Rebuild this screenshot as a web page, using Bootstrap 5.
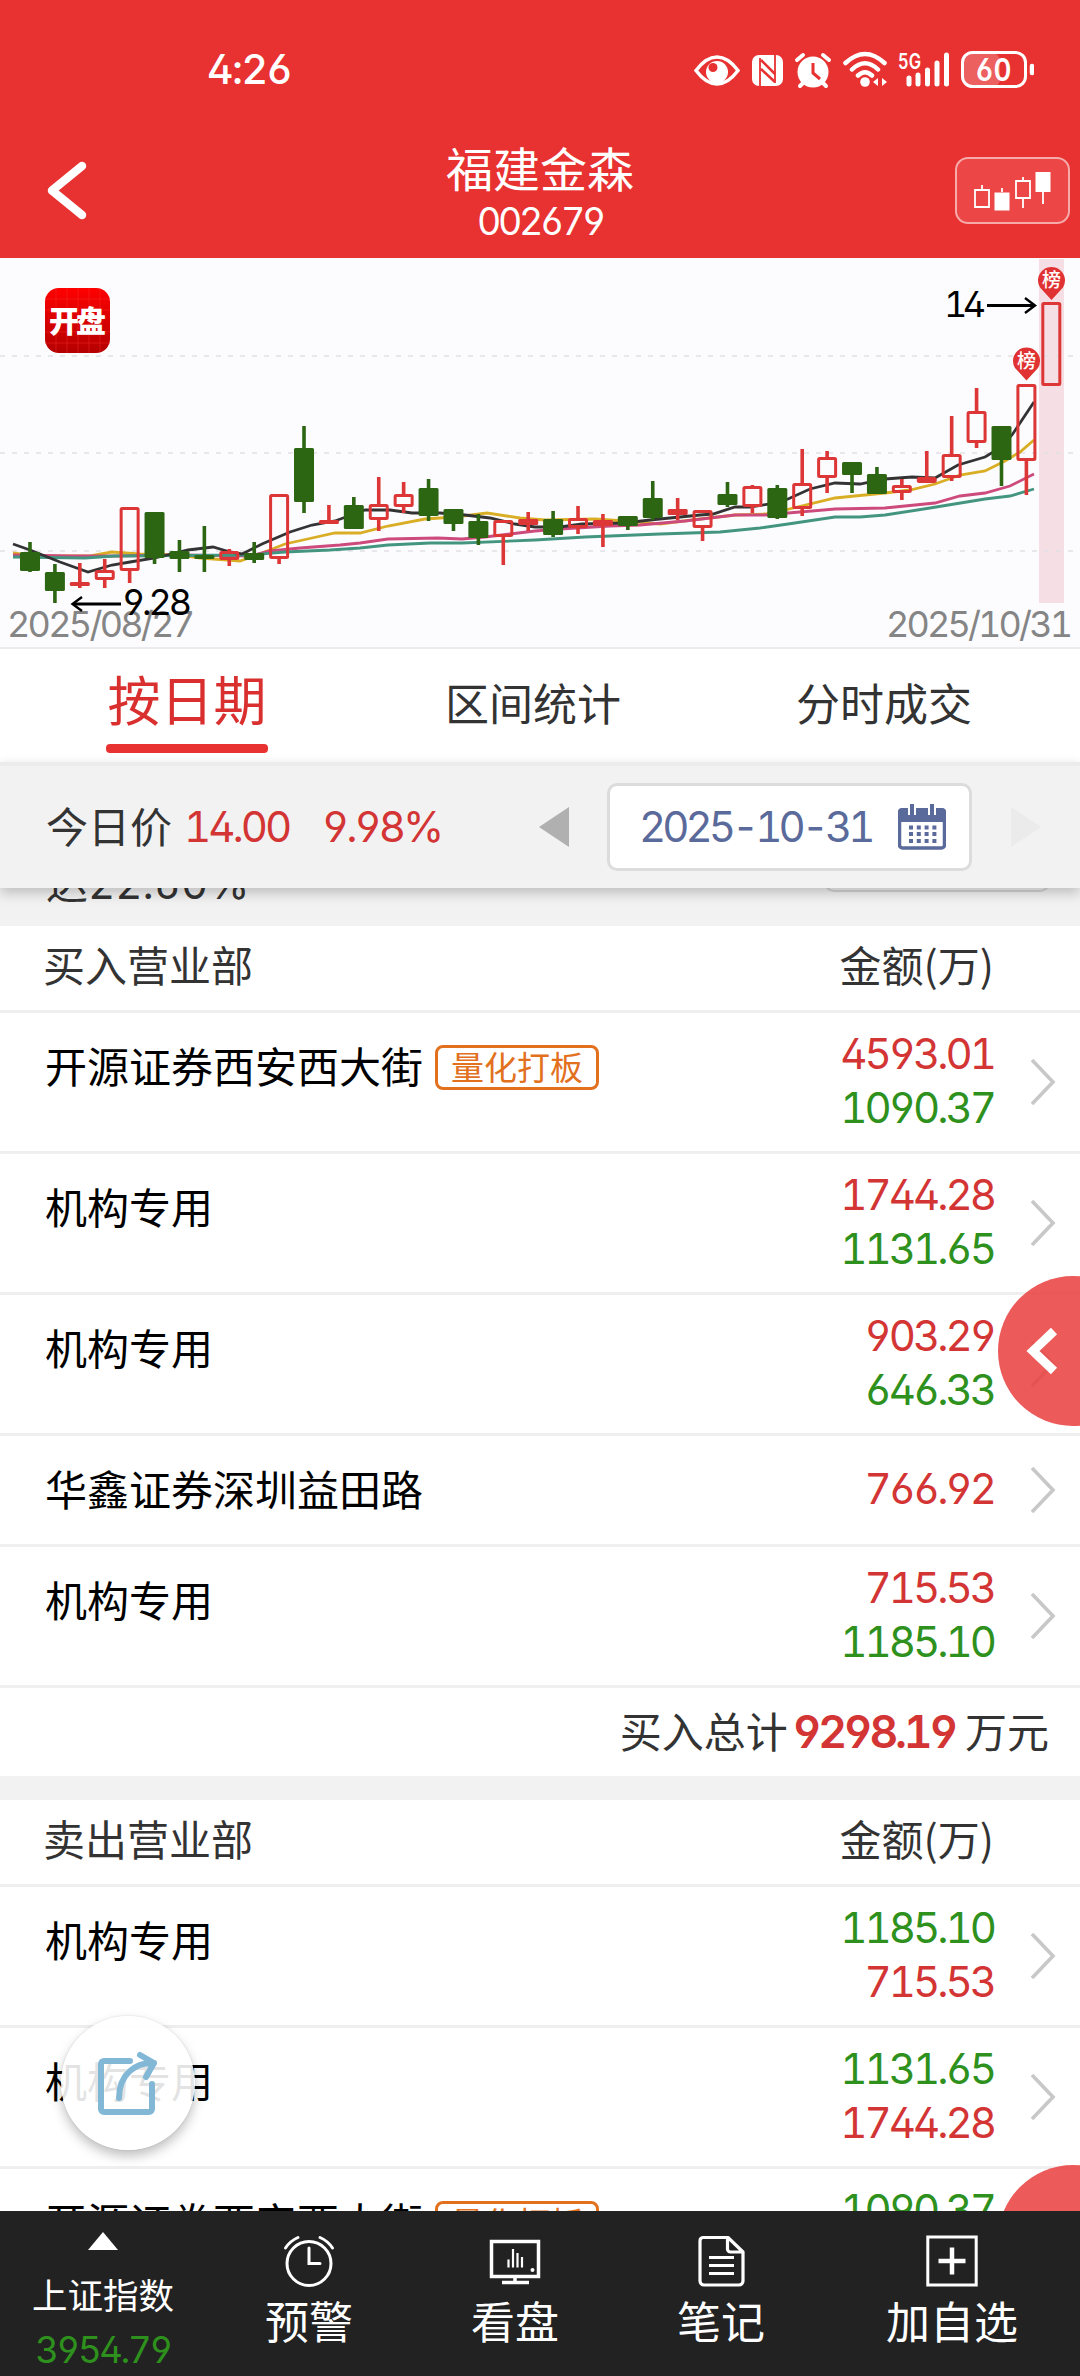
<!DOCTYPE html>
<html lang="zh-CN">
<head>
<meta charset="utf-8">
<meta name="viewport" content="width=device-width, initial-scale=1">
<title>福建金森 002679</title>
<link href="https://cdn.jsdelivr.net/npm/bootstrap@5.3.0/dist/css/bootstrap.min.css" rel="stylesheet">
<style>
body{font-family:Inter,"Noto Sans CJK SC",sans-serif;font-feature-settings:"tnum","cv02","cv03","cv04";color:#333;background:#fff;font-size:42px;line-height:54px}
.screen{width:1080px;height:2376px}
.cn{font-family:"Noto Sans CJK SC",sans-serif}
.num{letter-spacing:-3px;white-space:nowrap}
.up{color:#d33434}.down{color:#2e911d}
.top-area{height:258px;background:#e83131}
.status{height:138px;padding:0 46px 0 207px}
.clock{font-size:41px;font-weight:500;letter-spacing:-1.6px}
.titlebar{height:120px;padding:0 10px 0 45px}
.title-name{font-size:47px;line-height:58px}
.title-code{font-size:37.5px;line-height:52px;letter-spacing:-3.3px}
.kbtn{width:115px;height:67px;border:2px solid #f6aaaa;border-radius:13px;background:#ec4646;margin-top:19px}
.backbox{width:80px;padding-top:17px}
.chart{height:391px;background:#fcfcff;border-bottom:2px solid #ececf0}
.tabs{height:113px}
.tab-a{width:374px}.tab-b{width:318px}.tab-c{width:384px}
.tab-main{font-size:53px;line-height:91px;color:#d92f2f}
.underbar{width:162px;height:8.5px;border-radius:4px;background:#e83131}
.tab-text{font-size:44px;padding-bottom:7px}
.pricebar{height:126px;background:#f2f2f2;border-top:4px solid #ececec;box-shadow:0 5px 12px rgba(0,0,0,.22);padding-left:46px;z-index:2}
.price-label{padding-bottom:5px}
.price-val{margin-left:12px;width:138px}
.price-pct{width:216px}
.datebox{width:365px;height:88px;border:3px solid #dcdcdc;border-radius:10px;background:#fff;color:#5a6a9b;margin-left:37px;padding-left:29px}
.date-text{width:259px;letter-spacing:-4px;white-space:nowrap}
.next-arrow{margin-left:38px}
.peek{height:38px;background:#f2f2f2;padding-left:46px}
.peek-line{margin-top:-31px}
.peek-btn{width:226px;height:46px;margin:-42px 30px 0 0;border:2px solid #d4d4d4;border-radius:10px}
.headrow{height:87px;border-bottom:3px solid #efefef;padding:0 86px 9px 43px}
.seat{min-height:111px;border-bottom:3px solid #efefef;padding-left:45px}
.seat.two{height:141px}
.seat-name{color:#000;padding-top:25px}
.tag-q{font-size:33px;line-height:37px;color:#e2701d;border:3px solid #e2701d;border-radius:8px;padding:0 13px;margin-left:12px;height:45px;margin-top:7px}
.amts{width:200px;text-align:right;padding-bottom:2px}
.amts span{margin-right:-2px}
.chev{width:88px;padding-left:38px}
.totalrow{height:88px;padding-right:31px}
.totalrow .cn{padding-bottom:5px}
.totalnum{font-size:44.5px;font-weight:600;letter-spacing:-3.2px;margin:0 10px 0 5px}
.gap-strip{height:24px;background:#f2f2f2}
.navbar-dock{height:165px;background:#222;color:#fff;z-index:5}
.dock-item{width:206px}.dock-item.wide{width:256px}
.dock-icon{margin-top:24px}
.dock-tri{margin-top:21px}
.dock-label{font-size:44px;line-height:56px;margin-top:5px}
.dock-index{font-size:35.5px;line-height:50px;margin-top:19px}
.dock-value{font-size:36.5px;line-height:50px;letter-spacing:-2.3px;margin-top:6px}
.drawer{width:150px;height:150px;border-radius:50%;background:rgba(233,66,66,.87);right:-68px;z-index:3}
.drawer-a{top:1276px;padding-left:27px}.drawer-b{top:2165px}
.share{width:134px;height:134px;left:61px;top:2016px;border-radius:50%;background:rgba(255,255,255,.89);box-shadow:0 6px 12px rgba(0,0,0,.25),0 0 2px rgba(0,0,0,.15);z-index:3}
</style>
</head>
<body>
<div class="screen position-relative overflow-hidden">
  <header class="top-area text-white">
    <div class="status d-flex align-items-center justify-content-between">
      <span class="clock">4:26</span>
      <svg width="342" height="40" viewBox="691 48 342 40" fill="none" stroke="#fff">
        <path d="M695 69.500Q705 56 716 56T737 69.500Q727 83 716 83T695 69.500Z" stroke-width="3.500"/>
        <circle cx="716" cy="71" r="11" fill="#fff" stroke="none"/><circle cx="712" cy="66.500" r="4.500" fill="#e83131" stroke="none"/>
        <rect x="751" y="54" width="31" height="31" rx="7" fill="#fff" stroke="none"/>
        <path d="M759 57v28M774 54v28" stroke="#e83131" stroke-width="1.800"/><path d="M760 59l14 14M760 68l14 13" stroke="#e83131" stroke-width="2.500"/>
        <circle cx="812" cy="71" r="15.500" fill="#fff" stroke="none"/><path d="M796 59l6-5M828 59l-6-5M802 82l-3 3M822 82l3 3" stroke-width="4" stroke-linecap="round"/><path d="M812 62v10l7 6" stroke="#e83131" stroke-width="3"/>
        <g stroke-width="4.500" stroke-linecap="round"><path d="M844.500 62Q864 44 883.500 62M851 68.500Q864 56 877 68.500M857 74.500Q864 68 871 74.500"/></g><circle cx="864" cy="81" r="4.800" fill="#fff" stroke="none"/>
        <path d="M872 81l5-4v8zM886 81l-5-4v8z" fill="#fff" stroke="none"/>
        <text x="897" y="68" font-size="21" font-weight="600" fill="#fff" stroke="none" textLength="23" lengthAdjust="spacingAndGlyphs">5G</text>
        <path d="M908 77v6M917 74v9M926.500 69v14M936 62v21M945.500 54v29" stroke-width="5" stroke-linecap="round"/>
        <rect x="962" y="52" width="37" height="34" rx="8" fill="#ed6060" stroke="none"/>
        <rect x="961.500" y="51.500" width="63" height="34" rx="10" stroke-width="3"/>
        <text x="992.500" y="79.500" font-size="31" font-weight="600" text-anchor="middle" fill="#fff" stroke="none" textLength="36" lengthAdjust="spacingAndGlyphs">60</text>
        <path d="M1031 65v7" stroke-width="4.500" stroke-linecap="round"/>
      </svg>
    </div>
    <div class="titlebar d-flex align-items-start justify-content-between">
      <div class="backbox"><svg class="d-block mt-1" width="46" height="64" viewBox="0 0 46 64"><path d="M37 7L7 31.500L37 56" fill="none" stroke="#fff" stroke-width="8.500" stroke-linecap="round" stroke-linejoin="round"/></svg></div>
      <div class="text-center">
        <div class="title-name cn">福建金森</div>
        <div class="title-code">002679</div>
      </div>
      <div class="kbtn d-flex align-items-center justify-content-center">
        <svg width="80" height="42" viewBox="973 169 80 42" fill="none" stroke="#fff" stroke-width="1.800"><path d="M975 189h14v17h-14zM982 189v-5M1016 180h14v17h-14zM1023 180v-4M1023 197v10M1002 191v-4M1043 191v12"/><path d="M994.500 191.500h15v18h-15zM1035.500 171h15v20h-15z" fill="#fff" stroke="none"/></svg>
      </div>
    </div>
  </header>

  <section class="chart">
    <svg class="d-block" width="1080" height="389" viewBox="0 258 1080 389">
      <defs><linearGradient id="lg" x1="0" y1="0" x2="0" y2="1"><stop offset="0" stop-color="#f00"/><stop offset=".4" stop-color="#e00000"/><stop offset="1" stop-color="#b40000"/></linearGradient></defs>
      <rect x="1039" y="259" width="25" height="344" fill="#f6dfe4"/>
      <path d="M0 356H1078M0 453H1078M0 551H1078" stroke="#dfdfe6" stroke-width="1.600" stroke-dasharray="5 7"/>
      <g fill="none" stroke-width="2.800">
        <polyline stroke="#d9ae24" points="13,553 35,556 90,556 112,552 140,554 180,555 200,558 240,561 262,553 285,544 312,538 335,533 360,533 388,526 425,519 455,517 487,513 520,518 545,520 595,519 625,521 660,524 700,519 735,515 765,514 785,510 835,498 885,493 910,490 935,484 960,475 985,471 1005,461 1020,452 1034,440"/>
        <polyline stroke="#cc4a7c" points="13,555 70,556 115,556 180,555 250,556 270,551 300,548 340,545 360,543 388,539 438,538 462,539 485,537 510,534 535,531 560,529 610,526 640,525 685,521 735,515 765,515 788,513 835,509 885,508 935,503 960,496 985,493 1010,486 1034,474"/>
        <polyline stroke="#43957f" points="13,557 85,558 115,556 250,555 285,552 330,550 360,548 388,545 430,543 462,543 535,540 585,537 660,534 720,532 760,528 788,524 835,517 860,517 885,515 930,508 985,499 1010,496 1034,489"/>
        <polyline stroke="#333" points="13,544 30,550 60,562 88,572 112,565 130,562 155,558 188,550 213,547 230,552 242,554 262,544 290,532 312,525 335,521 354,514 365,510 390,510 412,513 440,513 465,515 490,518 515,524 535,527 560,527 582,524 625,523 650,520 700,515 713,514 735,507 750,507 770,504 788,499 810,489 835,483 860,484 885,479 912,477 935,478 958,465 985,457 1000,448 1012,435 1034,402"/>
      </g>
      <g id="candles"></g>
      <rect x="45" y="288" width="65" height="65" rx="14" fill="url(#lg)"/>
      <path d="M56 288v65M67 288v65M78 288v65M89 288v65M100 288v65M45 299h65M45 343h65M45 310h65M45 332h65" stroke="#ff3a3a" stroke-width=".6" opacity=".6"/>
      <g fill="#fff" font-family="Noto Sans CJK SC,sans-serif">
        <text x="77.500" y="332" font-size="30" font-weight="900" text-anchor="middle" textLength="57">开盘</text>
        <path d="M1051.500 300L1040 287.500A13.500 13.500 0 1 1 1063 287.500ZM1026.500 380.500L1015 368A13.500 13.500 0 1 1 1038 368Z" fill="#e03232"/>
        <text x="1051.500" y="287" font-size="19" font-weight="500" text-anchor="middle">榜</text>
        <text x="1026.500" y="367.500" font-size="19" font-weight="500" text-anchor="middle">榜</text>
      </g>
      <g font-size="36" fill="#858585">
        <text x="7" y="637" textLength="188">2025/08/27</text>
        <text x="886" y="637" textLength="187">2025/10/31</text>
        <text x="122" y="615" fill="#000" textLength="70">9.28</text>
        <text x="944" y="317" fill="#000" textLength="42">14</text>
      </g>
      <g fill="none" stroke="#000" stroke-width="3.200"><path d="M121 604H73M987 305.500H1034"/><path d="M82 597l-9.500 7 9.500 7M1025 298l10 7.500-10 7.500" stroke-width="2.400"/></g>
    </svg>
  </section>

  <nav class="tabs d-flex text-center">
    <div class="tab-a d-flex flex-column align-items-center pt-1"><span class="cn tab-main">按日期</span><span class="underbar"></span></div>
    <div class="tab-b tab-text cn d-flex align-items-center justify-content-center">区间统计</div>
    <div class="tab-c tab-text cn d-flex align-items-center justify-content-center">分时成交</div>
  </nav>

  <section class="pricebar d-flex align-items-center position-relative">
    <span class="cn price-label">今日价</span>
    <span class="num up price-val">14.00</span>
    <span class="num up price-pct">9.98%</span>
    <svg width="32" height="42" viewBox="0 0 32 42"><path d="M31 1V41L1 21Z" fill="#b0b0b0"/></svg>
    <div class="datebox d-flex align-items-center">
      <span class="date-text">2025-10-31</span>
      <svg width="48" height="46" viewBox="0 0 48 46"><rect x="1.500" y="6" width="45" height="38" rx="3" fill="#fff" stroke="#5a6a9b" stroke-width="3.500"/><path d="M0 18V8a4 4 0 014-4h40a4 4 0 014 4v10z" fill="#5a6a9b"/><path d="M14 0v11M34 0v11" stroke="#fff" stroke-width="8"/><path d="M14 0v11M34 0v11" stroke="#5a6a9b" stroke-width="4"/><path d="M11 23.500h28M11 30h28M11 37h28" stroke="#5a6a9b" stroke-width="4" stroke-dasharray="4 3.800"/></svg>
    </div>
    <svg class="next-arrow" width="32" height="42" viewBox="0 0 32 42"><path d="M1 1V41L31 21Z" fill="#ebebeb"/></svg>
  </section>
  <div class="peek d-flex justify-content-between align-items-start"><span class="peek-line">达22.60%</span><span class="peek-btn"></span></div>

  <main>
    <div class="headrow cn d-flex align-items-center justify-content-between"><span>买入营业部</span><span>金额(万)</span></div>
    <div id="buy"></div>
    <div class="totalrow d-flex align-items-center justify-content-end"><span class="cn">买入总计</span><span class="totalnum up">9298.19</span><span class="cn">万元</span></div>
    <div class="gap-strip"></div>
    <div class="headrow cn d-flex align-items-center justify-content-between"><span>卖出营业部</span><span>金额(万)</span></div>
    <div id="sell"></div>
  </main>

  <div class="drawer drawer-a position-absolute d-flex align-items-center"><svg width="34" height="50" viewBox="0 0 34 50"><path d="M29 5L8 25L29 45" fill="none" stroke="#fff" stroke-width="9"/></svg></div>
  <div class="drawer drawer-b position-absolute"></div>
  <div class="share position-absolute d-flex align-items-center justify-content-center">
    <svg width="62" height="66" viewBox="97 2050 62 66" fill="none" stroke="#82b7d6" stroke-width="6" stroke-linecap="round" stroke-linejoin="round"><path d="M130 2061H104a3 3 0 00-3 3V2109a3 3 0 003 3H149a3 3 0 003-3V2084"/><path d="M119 2098C119 2074 136 2062 154 2063M140 2055L154 2063L146 2077"/></svg>
  </div>

  <footer class="navbar-dock position-absolute bottom-0 start-0 w-100 d-flex text-center">
    <div class="dock-item d-flex flex-column align-items-center">
      <svg class="dock-tri" width="30" height="18" viewBox="0 0 30 18"><path d="M15 0L30 18H0Z" fill="#fff"/></svg>
      <span class="cn dock-index">上证指数</span>
      <span class="down dock-value">3954.79</span>
    </div>
    <div class="dock-item d-flex flex-column align-items-center">
      <svg class="dock-icon" width="52" height="52" viewBox="0 0 52 52" fill="none" stroke="#fff" stroke-width="3" stroke-linecap="round"><circle cx="26" cy="28.500" r="22"/><path d="M26 13v15.500h11M2.500 13Q7 6 15 2.500M49.500 13Q45 6 37 2.500"/></svg>
      <span class="dock-label cn">预警</span>
    </div>
    <div class="dock-item d-flex flex-column align-items-center">
      <svg class="dock-icon" width="52" height="52" viewBox="0 0 52 52" fill="none" stroke="#fff" stroke-width="3.500"><path d="M2.500 6.500h47v35h-47z"/><path d="M26 42v6M13 47.500h27"/><path d="M19.500 24.500v8M24 14v18.500M28.500 18v14.500M33 22v10.500" stroke-width="2.200"/><circle cx="43.500" cy="35" r="2" fill="#fff" stroke="none"/></svg>
      <span class="dock-label cn">看盘</span>
    </div>
    <div class="dock-item d-flex flex-column align-items-center">
      <svg class="dock-icon" width="52" height="52" viewBox="0 0 52 52" fill="none" stroke="#fff" stroke-width="3.200" stroke-linejoin="round"><path d="M8 2.500H33L48 17V46a4 4 0 01-4 4H9a4 4 0 01-4-4V6a3.500 3.500 0 013-3.500zM32.500 3V14a3 3 0 003 3H48M14 22.500h25M14 30.500h25M14 38.500h25"/></svg>
      <span class="dock-label cn">笔记</span>
    </div>
    <div class="dock-item wide d-flex flex-column align-items-center">
      <svg class="dock-icon" width="52" height="52" viewBox="0 0 52 52" fill="none" stroke="#fff" stroke-width="3"><path d="M1.800 2h48.400v48H1.800z"/><path d="M12.500 26h27M26 12.500v27" stroke-width="4.500"/></svg>
      <span class="dock-label cn">加自选</span>
    </div>
  </footer>
</div>
<script src="https://cdn.jsdelivr.net/npm/bootstrap@5.3.0/dist/js/bootstrap.bundle.min.js"></script>
<script>
// kind, high, body top, body bottom, low (r = hollow rise, s = thin rise, g = fall)
const bars=[['g',542,552,571,572],['g',564,572,591,603],['s',563,582,586,588],['r',559,570,580,588],['r',507,507,571,583],['g',512,512,558,564],['g',540,551,559,572],['g',526,555,559,572],['r',549,551,560,566],['g',542,553,560,563],['r',494,494,559,564],['g',426,448,502,513],['s',505,520,524,524],['g',497,505,529,529],['r',477,504,520,531],['r',482,494,507,513],['g',479,488,516,521],['g',509,509,524,531],['g',514,521,538,545],['r',520,520,537,565],['s',512,519,525,531],['g',511,519,535,537],['r',506,518,528,534],['s',514,520,526,547],['g',516,516,526,530],['g',481,498,518,520],['s',498,509,515,520],['r',510,510,528,541],['g',482,494,505,507],['r',485,486,507,513],['g',485,488,518,519],['r',449,483,509,516],['r',451,457,478,493],['g',462,462,475,493],['g',467,474,494,494],['r',479,485,493,500],['r',451,477,483,483],['r',416,454,478,481],['r',388,411,443,448],['g',426,426,460,486],['r',384,384,461,495],['r',302,302,386,386]];
document.getElementById('candles').innerHTML=bars.map(([k,h,t,b,l],i)=>{
  const x=30+24.91*i,c=k==='g'?'#2d6613':'#dc3636';
  const wick=`<path d="M${x} ${h}V${t}M${x} ${b}V${l}" stroke="${c}" stroke-width="3.6"/>`;
  return wick+(k==='r'?`<rect x="${x-8.5}" y="${t+1.4}" width="17" height="${b-t-2.8}" rx="1" fill="none" stroke="${c}" stroke-width="3"/>`
   :`<rect x="${x-10}" y="${t}" width="20" height="${b-t}" rx="1.5" fill="${c}"/>`);
}).join('');
const row=([name,a,b,tag],up)=>`<div class="seat ${b?'two':''} d-flex"><div class="seat-name cn flex-grow-1 d-flex align-items-start"><span>${name}</span>${tag?`<span class="tag-q">${tag}</span>`:''}</div>
<div class="amts num d-flex flex-column justify-content-center"><span class="${up?'up':'down'}">${a}</span>${b?`<span class="${up?'down':'up'}">${b}</span>`:''}</div>
<div class="chev d-flex align-items-center"><svg width="26" height="48" viewBox="0 0 26 48"><path d="M2 2L23 24L2 46" fill="none" stroke="#c8c8c8" stroke-width="3.6"/></svg></div></div>`;
const q='量化打板';
document.getElementById('buy').innerHTML=[['开源证券西安西大街','4593.01','1090.37',q],['机构专用','1744.28','1131.65'],['机构专用','903.29','646.33'],['华鑫证券深圳益田路','766.92'],['机构专用','715.53','1185.10']].map(r=>row(r,true)).join('');
document.getElementById('sell').innerHTML=[['机构专用','1185.10','715.53'],['机构专用','1131.65','1744.28'],['开源证券西安西大街','1090.37','4593.01',q]].map(r=>row(r,false)).join('');
</script>
</body>
</html>
